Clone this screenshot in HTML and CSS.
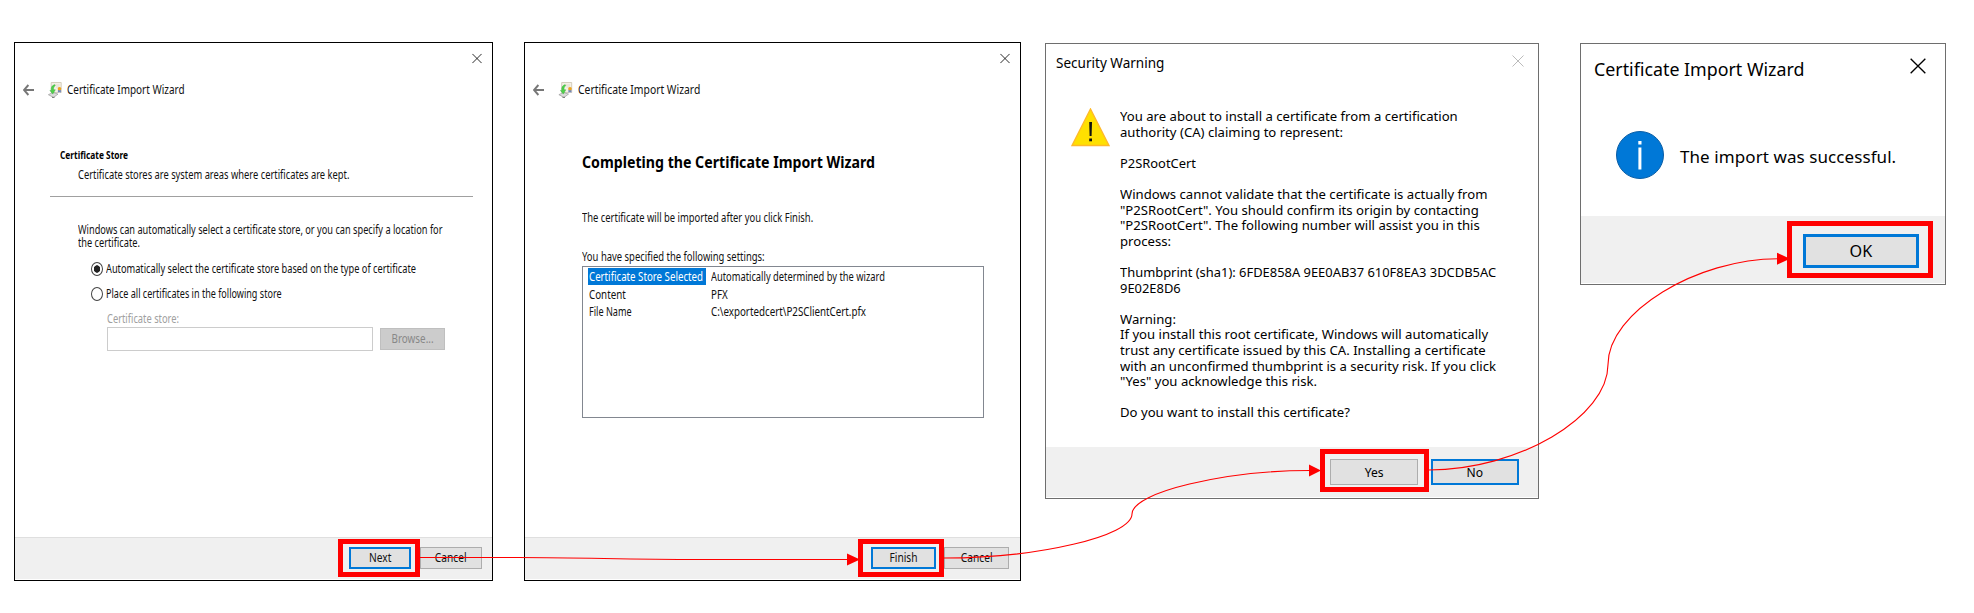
FILE: index.html
```
<!DOCTYPE html>
<html lang="en">
<head>
<meta charset="utf-8">
<title>Certificate Import Wizard</title>
<link rel="stylesheet" href="styles.css">
</head>
<body>
<svg class="defs" width="0" height="0" aria-hidden="true">
  <symbol id="close" viewBox="0 0 12 12"><path d="M.5.5 11.500 11.500M11.500.5.5 11.500" fill="none" stroke="currentColor"/></symbol>
  <symbol id="back" viewBox="0 0 11 12"><path d="M.8 6H11M5.400 1 1 6l4.400 5" fill="none" stroke="#777" stroke-width="1.900"/></symbol>
  <symbol id="cert" viewBox="0 0 14 16">
    <path d="M3.200.5h10v10h-10z" fill="#f4f0e6" stroke="#cfc8b8" stroke-width=".9"/>
    <path d="M7 3h4.500M8 5h3.500" stroke="#ddd6c6" stroke-width=".8"/>
    <path d="M.4 12.700 5 10.400l5 1.700-4.500 3.300z" fill="#dcdcdc" stroke="#999" stroke-width=".7"/>
    <path d="M4 15.400h2.500" stroke="#777"/>
    <path d="M6.600 2.600C3.600 3.600 2.800 5.800 3.400 8.400H1.900l2.900 3.700 2.500-4.300H5.700c-.4-1.800 0-2.900 1.600-4.200z" fill="#4fd04a" stroke="#36aa3a" stroke-width=".4"/>
    <path d="M9.900 7.600h3v3l-1.500-.6-1.500.6z" fill="#6c86c0"/>
    <circle cx="11.500" cy="6.700" r="1.800" fill="#eda620"/>
  </symbol>
</svg>

<main class="stage">
  <section class="window wizard wizard-store">
    <div class="close-row"><svg class="close"><use href="#close"/></svg></div>
    <header class="wizard-head">
      <svg class="back"><use href="#back"/></svg>
      <svg class="cert"><use href="#cert"/></svg>
      <span class="fit wizard-title">Certificate Import Wizard</span>
    </header>
    <h2 class="fit store-heading">Certificate Store</h2>
    <p class="fit store-sub">Certificate stores are system areas where certificates are kept.</p>
    <hr class="rule">
    <div class="store-body">
      <p class="fit store-intro">Windows can automatically select a certificate store, or you can specify a location for<br>the certificate.</p>
      <div class="option"><i class="radio radio-on"></i><span class="fit">Automatically select the certificate store based on the type of certificate</span></div>
      <div class="option"><i class="radio"></i><span class="fit option-place">Place all certificates in the following store</span></div>
      <div class="picker">
        <span class="fit picker-label">Certificate store:</span>
        <div class="picker-row">
          <div class="picker-input"></div>
          <div class="button button-disabled"><span class="fit">Browse...</span></div>
        </div>
      </div>
    </div>
    <footer class="footer">
      <div class="button button-default marked"><span class="fit">Next</span></div>
      <div class="button"><span class="fit">Cancel</span></div>
    </footer>
  </section>

  <section class="window wizard wizard-finish">
    <div class="close-row"><svg class="close"><use href="#close"/></svg></div>
    <header class="wizard-head">
      <svg class="back"><use href="#back"/></svg>
      <svg class="cert"><use href="#cert"/></svg>
      <span class="fit wizard-title">Certificate Import Wizard</span>
    </header>
    <div class="finish-body">
      <h1 class="fit finish-heading">Completing the Certificate Import Wizard</h1>
      <p class="fit finish-note">The certificate will be imported after you click Finish.</p>
      <p class="fit finish-label">You have specified the following settings:</p>
      <div class="settings">
        <span class="setting-name setting-selected"><b class="fit">Certificate Store Selected</b></span><span class="fit setting-auto">Automatically determined by the wizard</span>
        <span class="setting-name"><b class="fit">Content</b></span><span class="fit">PFX</span>
        <span class="setting-name"><b class="fit setting-file">File Name</b></span><span class="fit">C:\exportedcert\P2SClientCert.pfx</span>
      </div>
    </div>
    <footer class="footer">
      <div class="button button-default marked"><span class="fit">Finish</span></div>
      <div class="button"><span class="fit">Cancel</span></div>
    </footer>
  </section>

  <section class="window dialog warning">
    <header class="dialog-head">
      <span class="fit dialog-title">Security Warning</span>
      <svg class="close"><use href="#close"/></svg>
    </header>
    <div class="dialog-body">
      <svg class="warning-icon" viewBox="0 0 39 39">
        <path d="M19.500 1 38 37.500H1z" fill="#ffe000" stroke="#ffb92a" stroke-width="1.400"/>
        <path d="M18.200 14h2.800l-.4 14h-2z" fill="#111"/><path d="M18.200 30.500h2.800v2.800h-2.800z" fill="#111"/>
      </svg>
      <div class="message">
        <p class="fit">You are about to install a certificate from a certification<br>authority (CA) claiming to represent:</p>
        <p class="fit message-tight">P2SRootCert</p>
        <p class="fit">Windows cannot validate that the certificate is actually from<br>"P2SRootCert". You should confirm its origin by contacting<br>"P2SRootCert". The following number will assist you in this<br>process:</p>
        <p class="fit message-tight">Thumbprint (sha1): 6FDE858A 9EE0AB37 610F8EA3 3DCDB5AC<br>9E02E8D6</p>
        <p class="fit">Warning:<br>If you install this root certificate, Windows will automatically<br>trust any certificate issued by this CA. Installing a certificate<br>with an unconfirmed thumbprint is a security risk. If you click<br>"Yes" you acknowledge this risk.</p>
        <p class="fit">Do you want to install this certificate?</p>
      </div>
    </div>
    <footer class="footer">
      <div class="button marked"><span class="fit">Yes</span></div>
      <div class="button button-default"><span class="fit">No</span></div>
    </footer>
  </section>

  <section class="window dialog success">
    <header class="dialog-head">
      <span class="fit dialog-title">Certificate Import Wizard</span>
      <svg class="close"><use href="#close"/></svg>
    </header>
    <div class="dialog-body">
      <svg class="info-icon" viewBox="0 0 48 48">
        <circle cx="24" cy="24" r="23.500" fill="#0078d7" stroke="#0a5ea6"/>
        <path d="M22.300 10h3.200v3.400h-3.200zM22.400 16.500h3v22h-3z" fill="#fff"/>
      </svg>
      <p class="message">The import was successful.</p>
    </div>
    <footer class="footer">
      <div class="button button-default marked"><span class="fit">OK</span></div>
    </footer>
  </section>

  <svg class="connectors" viewBox="0 0 1974 613" aria-hidden="true">
    <g fill="none" stroke="#f00" stroke-width="1.100">
      <path d="M420 557.500H518C590 557.500 620 559.500 700 559.500H848"/>
      <path d="M944 558C1038 558 1132 536 1132 514C1132 492 1226 470.500 1310 470.500"/>
      <path d="M1429 470C1518 470 1608 417 1608 364.500C1608 312 1697 258.700 1778 258.700"/>
    </g>
    <path d="M847 553.500 860 559.500 847 565.500zM1309 464.500 1321 470.500 1309 476.500zM1777 252.700 1790 258.700 1777 264.700z" fill="#f00"/>
  </svg>
</main>
</body>
</html>
```
FILE: styles.css
```
* { box-sizing: border-box; }

body {
  margin: 0;
  background: #fff;
  color: #111;
  font: 12px/16px "Noto Sans", "Open Sans", sans-serif;
}

h1, h2, p, hr { margin: 0; }
b, i { font-weight: inherit; font-style: normal; }
svg { display: block; flex: none; }
.defs { position: absolute; }

.stage {
  position: relative;
  display: flex;
  align-items: flex-start;
  width: 1974px;
  height: 613px;
  padding: 42px 0 0 14px;
  overflow: hidden;
}

/* Text squeezed horizontally by the factor --sx */
.fit {
  display: block;
  white-space: nowrap;
  transform: scaleX(var(--sx, 1));
  transform-origin: 0 50%;
}

.window {
  display: flex;
  flex: none;
  flex-direction: column;
  background: #fff;
}

/* Footer and buttons */
.footer {
  display: flex;
  justify-content: flex-end;
  align-items: flex-start;
  margin-top: auto;
  background: #f0f0f0;
}

.button {
  position: relative;
  display: flex;
  align-items: center;
  justify-content: center;
  background: #e1e1e1;
  border: 1px solid #adadad;
}

.button .fit { transform-origin: 50% 50%; }
.button-default { border: 2px solid #0078d7; }
.button-disabled { background: #ccc; border-color: #bfbfbf; color: #888; }

.marked::after {
  content: "";
  position: absolute;
  inset: var(--mark);
  border: 5px solid #f00;
}

/* Wizard windows */
.wizard {
  --sx: .775;
  height: 539px;
  padding-bottom: 1px;
  border: 1px solid #000;
}

.wizard-store { width: 479px; }
.wizard-finish { width: 497px; margin-left: 31px; --sx: .787; }

.close-row { display: flex; justify-content: flex-end; padding: 10px 10.500px 0 0; }
.wizard .close { width: 10px; height: 11px; color: #000; }

.wizard-head { display: flex; align-items: center; height: 16px; margin-top: 18px; padding-left: 8px; }
.back { width: 11px; height: 12px; margin-right: 14px; }
.cert { width: 14px; height: 16px; margin-right: 5px; }
.wizard-title { font-size: 12.5px; --sx: .796; }
.wizard-finish .cert { width: 15px; }
.wizard-finish .wizard-title { --sx: .828; }

.wizard .footer { height: 42px; padding: 9px 10px 0 0; border-top: 1px solid #dfdfdf; }
.wizard .footer .button { width: 62px; height: 22px; --sx: .85; }
.wizard .button-default { width: 63px; margin-right: 9px; --mark: -10px -11px -10px -13px; }
.wizard-finish .footer { padding-right: 11px; }
.wizard-finish .footer .button { width: 65px; }
.wizard-finish .footer .button-default { margin-right: 8px; --mark: -10px -10px -10px -15px; }

.store-heading { margin: 49px 0 0 44.500px; font-size: 11px; line-height: 16px; font-weight: 700; color: #000; --sx: .76; }
.store-sub { margin: 4px 0 0 63px; --sx: .778; }
.rule { width: 423px; height: 1px; margin: 13px 0 0 35px; border: 0; background: #a0a0a0; }
.store-body { padding: 26px 0 0 63px; }
.store-intro { line-height: 13.3px; --sx: .768; }

.option { display: flex; align-items: center; height: 16px; margin: 9px 0 0 13px; --sx: .77; }
.store-intro + .option { margin-top: 11px; }
.option-place { --sx: .755; }
.radio { flex: none; width: 12px; height: 14px; margin-right: 3px; border: 1px solid #444; border-radius: 50%; }
.radio-on { background: radial-gradient(ellipse 3.500px 4px, #222 85%, transparent); }

.picker { margin: 9px 0 0 29px; }
.picker-label { color: #a0a0a0; --sx: .777; }
.picker-row { display: flex; align-items: center; gap: 7px; }
.picker-input { width: 266px; height: 24px; border: 1px solid #ccc; }
.picker .button { width: 65px; height: 22px; --sx: .821; }

.finish-body { padding: 50px 0 0 57px; }
.finish-heading { font-size: 15.5px; line-height: 24px; font-weight: 700; color: #000; margin-top: 2px; --sx: .914; }
.finish-note { margin-top: 36px; --sx: .784; }
.finish-label { margin-top: 23px; }

.settings {
  display: grid;
  grid-template-columns: 118px 1fr;
  grid-auto-rows: 17.500px;
  column-gap: 5px;
  align-content: start;
  align-items: center;
  width: 402px;
  height: 152px;
  margin-top: 1px;
  padding: 1px 0 0 5px;
  border: 1px solid #828790;
  --sx: .815;
}

.settings .fit { min-width: 0; padding-top: 1px; }
.setting-name { height: 17px; padding: 0 0 0 1px; }
.setting-selected { background: #0078d7; color: #fff; --sx: .809; }
.setting-auto { --sx: .776; }
.setting-file { --sx: .757; }

/* Message dialogs */
.dialog { margin-top: 1px; padding-bottom: 1px; border: 1px solid #6e6e6e; }
.dialog-head { display: flex; justify-content: space-between; }
.dialog-body { display: flex; }

.warning { width: 494px; height: 456px; margin-left: 24px; font-size: 13px; color: #000; --sx: 1.010; }
.warning .dialog-head { padding: 9px 14px 0 10px; }
.warning .dialog-title { font-size: 14px; line-height: 20px; --sx: .967; }
.warning .close { width: 12px; height: 12px; margin-top: 2px; color: #bbb; }
.warning .dialog-body { gap: 10px; padding: 35px 0 0 25px; }
.warning-icon { width: 39px; height: 39px; }
.warning .message { padding-top: 1px; line-height: 15.600px; }
.warning .message p + p { margin-top: 15.600px; }
.warning .message-tight { --sx: .993; }
.warning .footer { height: 50px; padding: 12px 19px 0 0; gap: 13px; }
.warning .footer .button { width: 88px; height: 26px; --sx: .93; }
.warning .marked { --mark: -11px -12px -8px -11px; }

.success { width: 366px; height: 242px; margin-left: 41px; color: #000; --sx: 1.018; }
.success .dialog-head { padding: 13px 19px 0 13px; }
.success .dialog-title { font-size: 17.500px; line-height: 24px; }
.success .close { width: 16px; height: 16px; margin-top: 1px; }
.success .dialog-body { align-items: center; gap: 16px; padding: 50px 0 0 35px; }
.info-icon { width: 48px; height: 48px; }
.success .message { padding-top: 4px; font-size: 17px; line-height: 24px; letter-spacing: .08px; }
.success .footer { height: 67px; padding: 18px 26px 0 0; }
.success .button { width: 116px; height: 34px; border-width: 3px; font-size: 17px; --sx: .95; --mark: -16px -17px -13px -19px; }

/* Arrows between the windows */
.connectors { position: absolute; left: 0; top: 0; width: 1974px; height: 613px; pointer-events: none; }
```
